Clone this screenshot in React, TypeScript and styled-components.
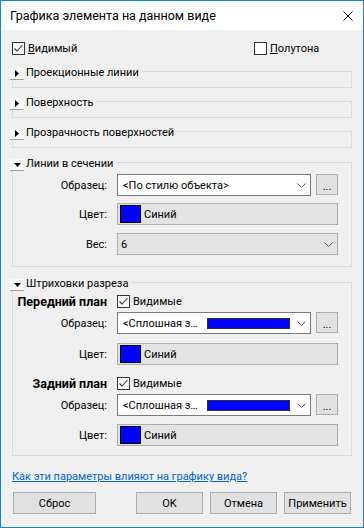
import React from 'react';
import styled, { createGlobalStyle } from 'styled-components';

const Global = createGlobalStyle`
  html, body { margin: 0; padding: 0; background: #ffffff; }
  body { font-family: Roboto, "Liberation Sans", sans-serif; font-size: 11px; color: #000; }
  * { box-sizing: border-box; }
`;

const Window = styled.div`
  width: 364px;
  height: 528px;
  border: 1px solid #1883d7;
  background: #f0f0f0;
  display: flex;
  flex-direction: column;
`;

const TitleBar = styled.div`
  height: 29px;
  flex-shrink: 0;
  background: #ffffff;
  display: flex;
  align-items: center;
  justify-content: space-between;
  padding: 0 10px 0 9px;
`;

const Title = styled.span`
  font-size: 12.5px;
  color: #000;
`;

const Body = styled.div`
  flex: 1;
  display: flex;
  flex-direction: column;
  padding: 0 11px;
`;

const TopRow = styled.div`
  margin-top: 12px;
  height: 13px;
  display: grid;
  grid-template-columns: 242px auto;
  align-items: center;
`;

const CheckLabel = styled.label`
  display: inline-flex;
  align-items: center;
  gap: 3px;
  line-height: 13px;
  white-space: nowrap;
`;

const Box = styled.span`
  width: 13px;
  height: 13px;
  border: 1px solid #333333;
  background: #ffffff;
  display: inline-flex;
  align-items: center;
  justify-content: center;
  flex-shrink: 0;
`;

const Key = styled.span`
  text-decoration: underline;
`;

const Group = styled.div<{ $mt: number }>`
  margin-top: ${p => p.$mt}px;
  display: flex;
  flex-direction: column;
`;

const GroupHead = styled.div`
  display: flex;
  height: 12px;
  margin-left: -2px;
  width: calc(100% + 2px);
`;

const Toggle = styled.div`
  width: 14px;
  height: 12px;
  flex-shrink: 0;
  background: #f8f8f8;
  border-bottom: 1px solid #a0a0a0;
  display: flex;
  align-items: center;
  justify-content: center;
`;

const GroupTitle = styled.span`
  padding: 0 3px 0 2px;
  line-height: 12px;
  margin-top: -1px;
  white-space: nowrap;
`;

const HeadLine = styled.div`
  flex: 1;
  margin-top: 3px;
  border-top: 1px solid #dcdcdc;
  border-right: 1px solid #dcdcdc;
`;

const GroupBody = styled.div<{ $h?: number; $pb?: number }>`
  border: 1px solid #dcdcdc;
  border-top: none;
  ${p => (p.$h ? `height: ${p.$h}px;` : '')}
  padding-bottom: ${p => p.$pb ?? 0}px;
  display: flex;
  flex-direction: column;
`;

const FormRow = styled.div<{ $mt: number; $h?: number }>`
  margin-top: ${p => p.$mt}px;
  height: ${p => p.$h ?? 22}px;
  display: grid;
  grid-template-columns: 94px 1fr;
  column-gap: 10px;
  align-items: center;
  padding-right: 13px;
`;

const Label = styled.span<{ $bold?: boolean }>`
  text-align: right;
  white-space: nowrap;
  font-weight: ${p => (p.$bold ? 700 : 400)};
  font-size: ${p => (p.$bold ? '12.5px' : 'inherit')};
`;

const ComboLine = styled.div`
  display: flex;
  gap: 5px;
  height: 22px;
`;

const Combo = styled.div<{ $gray?: boolean }>`
  flex: 1;
  height: 22px;
  display: flex;
  align-items: center;
  padding-left: ${p => (p.$gray ? 3 : 5)}px;
  background: ${p => (p.$gray ? '#e3e3e3' : '#ffffff')};
  border: 1px solid ${p => (p.$gray ? '#adadad' : '#7a7a7a')};
  white-space: nowrap;
  overflow: hidden;
`;

const ComboText = styled.span`
  flex: 1;
`;

const HatchBar = styled.span`
  width: 83px;
  height: 11px;
  background: #0000ff;
  border: 1px solid #303030;
  margin-right: 3px;
  flex-shrink: 0;
`;

const ChevronBox = styled.span`
  width: 17px;
  display: flex;
  align-items: center;
  justify-content: center;
  flex-shrink: 0;
`;

const DotsButton = styled.div`
  width: 22px;
  height: 21px;
  background: #e1e1e1;
  border: 1px solid #adadad;
  display: flex;
  align-items: center;
  justify-content: center;
  padding-top: 3px;
`;

const ColorField = styled.div`
  height: 22px;
  display: flex;
  align-items: center;
  gap: 3px;
  padding-left: 2px;
  background: #e3e3e3;
  border: 1px solid #adadad;
`;

const Swatch = styled.span`
  width: 21px;
  height: 18px;
  background: #0000ff;
  border: 1px solid #000000;
`;

const Link = styled.a`
  margin-top: 13px;
  line-height: 15px;
  color: #0066cc;
  text-decoration: underline;
  align-self: flex-start;
`;

const ButtonRow = styled.div`
  margin-top: 8px;
  display: flex;
  gap: 7px;
  padding: 0 1px;
`;

const Button = styled.div<{ $w: number; $push?: boolean }>`
  width: ${p => p.$w}px;
  height: 22px;
  background: #e1e1e1;
  border: 1px solid #adadad;
  display: flex;
  align-items: center;
  justify-content: center;
  ${p => (p.$push ? 'margin-left: auto;' : '')}
`;

const Check = ({ on }: { on: boolean }) => (
  <Box>
    {on && (
      <svg width="11" height="11" viewBox="0 0 11 11">
        <polyline points="1.5,5.5 4,8 9.5,2" fill="none" stroke="#333" strokeWidth="1.1" />
      </svg>
    )}
  </Box>
);

const Chevron = () => (
  <svg width="9" height="5" viewBox="0 0 9 5">
    <polyline points="0.5,0.5 4.5,4.5 8.5,0.5" fill="none" stroke="#555" strokeWidth="1" />
  </svg>
);

const Arrow = ({ open }: { open: boolean }) =>
  open ? (
    <svg width="7" height="4" viewBox="0 0 7 4">
      <polygon points="0,0 7,0 3.5,4" fill="#000" />
    </svg>
  ) : (
    <svg width="4" height="7" viewBox="0 0 4 7">
      <polygon points="0,0 4,3.5 0,7" fill="#000" />
    </svg>
  );

const Header = ({ title, open }: { title: string; open: boolean }) => (
  <GroupHead>
    <Toggle>
      <Arrow open={open} />
    </Toggle>
    <GroupTitle>{title}</GroupTitle>
    <HeadLine />
  </GroupHead>
);

const Collapsed = ({ title, mt }: { title: string; mt: number }) => (
  <Group $mt={mt}>
    <Header title={title} open={false} />
    <GroupBody $h={8} />
  </Group>
);

const PatternRow = ({ mt, hatch, text }: { mt: number; hatch?: boolean; text: string }) => (
  <FormRow $mt={mt}>
    <Label>Образец:</Label>
    <ComboLine>
      <Combo>
        <ComboText>{text}</ComboText>
        {hatch && <HatchBar />}
        <ChevronBox>
          <Chevron />
        </ChevronBox>
      </Combo>
      <DotsButton>...</DotsButton>
    </ComboLine>
  </FormRow>
);

const ColorRow = ({ mt }: { mt: number }) => (
  <FormRow $mt={mt}>
    <Label>Цвет:</Label>
    <ColorField>
      <Swatch />
      <span>Синий</span>
    </ColorField>
  </FormRow>
);

const SubHead = ({ mt, title }: { mt: number; title: string }) => (
  <FormRow $mt={mt} $h={15}>
    <Label $bold>{title}</Label>
    <CheckLabel>
      <Check on />
      Видимые
    </CheckLabel>
  </FormRow>
);

export default function App() {
  return (
    <>
      <Global />
      <Window>
        <TitleBar>
          <Title>Графика элемента на данном виде</Title>
          <svg width="10" height="10" viewBox="0 0 10 10">
            <path d="M0.5 0.5 L9.5 9.5 M9.5 0.5 L0.5 9.5" stroke="#000" strokeWidth="1" />
          </svg>
        </TitleBar>
        <Body>
          <TopRow>
            <CheckLabel>
              <Check on />
              <span>
                <Key>В</Key>идимый
              </span>
            </CheckLabel>
            <CheckLabel>
              <Check on={false} />
              <span>
                <Key>П</Key>олутона
              </span>
            </CheckLabel>
          </TopRow>

          <Collapsed title="Проекционные линии" mt={13} />
          <Collapsed title="Поверхность" mt={10} />
          <Collapsed title="Прозрачность поверхностей" mt={10} />

          <Group $mt={11}>
            <Header title="Линии в сечении" open />
            <GroupBody $pb={11}>
              <PatternRow mt={3} text="<По стилю объекта>" />
              <ColorRow mt={7} />
              <FormRow $mt={8}>
                <Label>Вес:</Label>
                <Combo $gray>
                  <ComboText>6</ComboText>
                  <ChevronBox>
                    <Chevron />
                  </ChevronBox>
                </Combo>
              </FormRow>
            </GroupBody>
          </Group>

          <Group $mt={12}>
            <Header title="Штриховки разреза" open />
            <GroupBody $pb={9}>
              <SubHead mt={3} title="Передний план" />
              <PatternRow mt={3} hatch text="<Сплошная з…" />
              <ColorRow mt={9} />
              <SubHead mt={11} title="Задний план" />
              <PatternRow mt={3} hatch text="<Сплошная з…" />
              <ColorRow mt={8} />
            </GroupBody>
          </Group>

          <Link>Как эти параметры влияют на графику вида?</Link>

          <ButtonRow>
            <Button $w={83}>Сброс</Button>
            <Button $w={67} $push>
              OK
            </Button>
            <Button $w={67}>Отмена</Button>
            <Button $w={67}>Применить</Button>
          </ButtonRow>
        </Body>
      </Window>
    </>
  );
}
